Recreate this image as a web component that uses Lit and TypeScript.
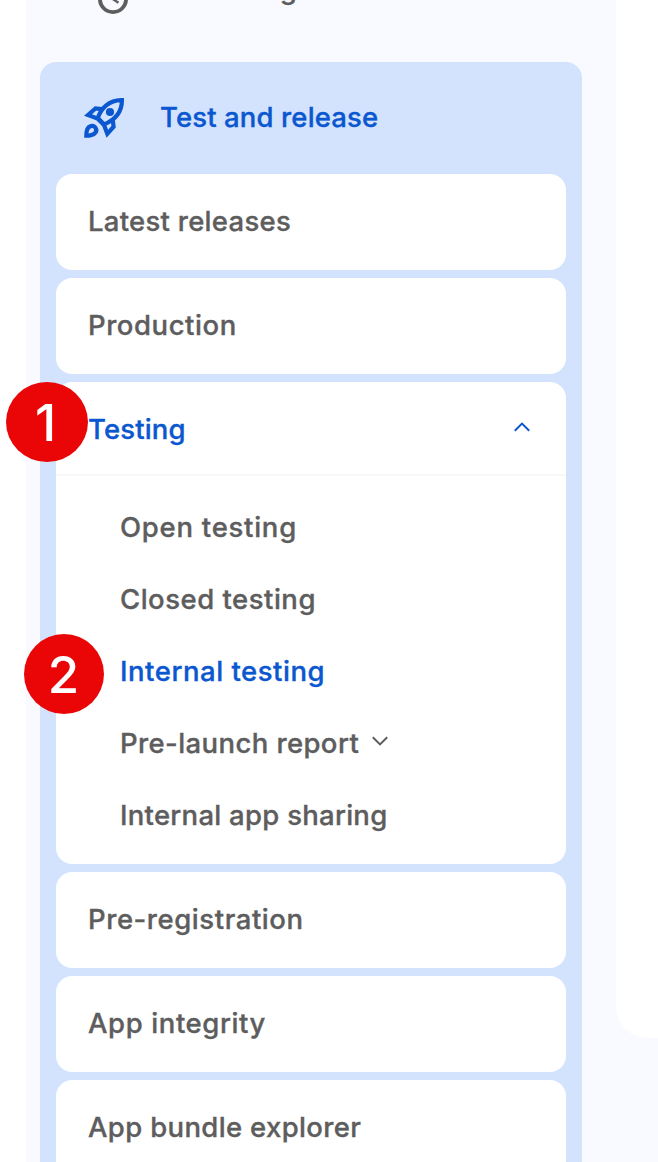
import { LitElement, html, css, nothing } from "lit";
import { customElement } from "lit/decorators.js";
import { classMap } from "lit/directives/class-map.js";

interface Entry {
  label: string;
  tracking: number;
  active?: boolean;
  expandable?: boolean;
  badge?: string;
  children?: Entry[];
}

const entries: Entry[] = [
  { label: "Latest releases", tracking: 0.27 },
  { label: "Production", tracking: 0.55 },
  {
    label: "Testing",
    tracking: 0.15,
    active: true,
    badge: "1",
    children: [
      { label: "Open testing", tracking: 0.74 },
      { label: "Closed testing", tracking: 0.5 },
      { label: "Internal testing", tracking: 0.53, active: true, badge: "2" },
      { label: "Pre-launch report", tracking: 0.4, expandable: true },
      { label: "Internal app sharing", tracking: 0.27 },
    ],
  },
  { label: "Pre-registration", tracking: 0.56 },
  { label: "App integrity", tracking: 0.6 },
  { label: "App bundle explorer", tracking: 0.34 },
];

@customElement("app-root")
export class AppRoot extends LitElement {
  static styles = css`
    :host {
      display: block;
      height: 1162px;
      overflow: hidden;
      background: #fff;
      font-family: Inter, Roboto, sans-serif;
      font-size: 27.5px;
      font-weight: 500;
      line-height: 36px;
      color: #5d5d5e;
    }
    .page {
      display: flex;
      height: 1162px;
      margin-left: 26px;
      background: #f8faff;
    }
    .nav {
      width: 542px;
      margin: 0 34px 0 14px;
      flex: none;
    }
    .content {
      flex: 1;
      height: 1038px;
      background: #fff;
      border-bottom-left-radius: 32px;
    }
    .row {
      display: flex;
      align-items: center;
    }
    .overview {
      height: 48px;
      margin: -34px 0 48px;
      padding-left: 53px;
    }
    .overview svg {
      margin-top: 18px;
    }
    .overview .label {
      margin-left: 27px;
    }
    svg {
      display: block;
      flex: none;
      fill: none;
      stroke: currentColor;
    }
    .group {
      height: 1116px;
      border-radius: 16px;
      background: #d3e3fd;
    }
    .head {
      height: 112px;
      padding-left: 44px;
      color: #0b57d0;
    }
    .head .label {
      margin-left: 36px;
    }
    .label {
      white-space: nowrap;
      padding-bottom: 2px;
      -webkit-text-stroke: 0.35px currentColor;
    }
    .list {
      display: flex;
      flex-direction: column;
      gap: 8px;
      padding: 0 16px;
    }
    .card {
      border-radius: 16px;
      background: #fff;
    }
    .item {
      position: relative;
      height: 96px;
      padding: 0 36px 0 32px;
      box-sizing: border-box;
      justify-content: space-between;
    }
    .item.open {
      height: 94px;
      padding-top: 4px;
      border-bottom: 2px solid #f8f8f9;
    }
    .sub {
      padding: 16px 0 12px;
    }
    .subitem {
      position: relative;
      height: 72px;
      padding-left: 64px;
    }
    .active {
      color: #0b57d0;
    }
    .up {
      margin-top: -6px;
    }
    .down {
      margin: -6px 0 0 13px;
    }
    .badge {
      position: absolute;
      box-sizing: border-box;
      display: flex;
      align-items: center;
      justify-content: center;
      height: 80px;
      padding-top: 2px;
      border-radius: 50%;
      background: #ea0606;
      color: #fff;
      font: 500 51px/78px Inter, Arial, sans-serif;
    }
    .badge.b1 {
      left: -50px;
      top: 0;
      width: 82px;
      padding-right: 3px;
    }
    .badge.b2 {
      left: -32px;
      top: -2px;
      width: 80px;
      padding-right: 1px;
    }
  `;

  private label(text: string, tracking: number) {
    return html`<span class="label" style="letter-spacing:${tracking}px">${text}</span>`;
  }

  private badge(n?: string) {
    return n ? html`<span class=${`badge b${n}`}>${n}</span>` : nothing;
  }

  private chevron(up: boolean) {
    return html`<svg class=${up ? "up" : "down"} width="16" height="10" viewBox="0 0 16 10" stroke-width="2">
      <path d=${up ? "M.8 8.8 8 1.6l7.2 7.2" : "M.8 1.2 8 8.4l7.2-7.2"} />
    </svg>`;
  }

  private card(e: Entry) {
    const row = { row: true, item: true, active: !!e.active, open: !!e.children };
    return html`<div class="card">
      <div class=${classMap(row)}>
        ${this.label(e.label, e.tracking)} ${e.children ? this.chevron(true) : nothing} ${this.badge(e.badge)}
      </div>
      ${e.children
        ? html`<div class="sub">
            ${e.children.map(
              (c) => html`<div class=${classMap({ row: true, subitem: true, active: !!c.active })}>
                ${this.label(c.label, c.tracking)} ${c.expandable ? this.chevron(false) : nothing}
                ${this.badge(c.badge)}
              </div>`
            )}
          </div>`
        : nothing}
    </div>`;
  }

  render() {
    return html`<div class="page">
      <nav class="nav">
        <div class="row overview">
          <svg width="40" height="40" viewBox="0 0 40 40" stroke-width="3.8">
            <circle cx="20" cy="20" r="13.1" />
            <path d="M19 10v9.500l6.500 4.300" stroke-width="2.4" />
          </svg>
          ${this.label("Publishing overview", 0)}
        </div>
        <section class="group">
          <div class="row head">
            <svg width="40" height="40" viewBox="0 0 40 40" stroke-width="4.2">
              <path d="M13.800 20C17 10.500 25 1.900 37.900 2.100C38.100 15 29.500 22.500 20.300 26.400Z" />
              <path d="M17.800 11.200 11.500 10.400 4 17 13.500 20.500 20 27 23.300 35.800 29.600 28.700 28.800 22" />
              <path d="M2.300 37.700C2.300 34 2.800 30.800 5 29C7.200 27.200 10 27.800 11.400 29.600C12.900 31.800 12.400 33.800 10.800 35.300C8.800 37 5.500 37.600 2.300 37.700Z" />
              <circle cx="26" cy="14" r="4.100" fill="currentColor" stroke="none" />
            </svg>
            ${this.label("Test and release", 0.13)}
          </div>
          <div class="list">${entries.map((e) => this.card(e))}</div>
        </section>
      </nav>
      <main class="content"></main>
    </div>`;
  }
}
